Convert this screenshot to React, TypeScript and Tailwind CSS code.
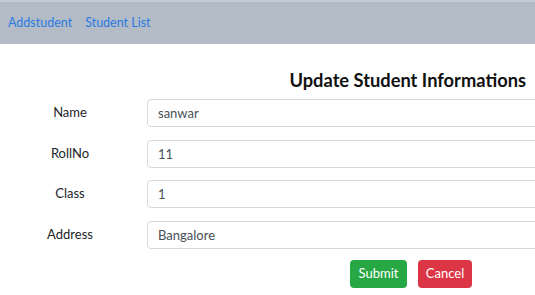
import React from 'react';

const fields = [
  { label: 'Name', value: 'sanwar' },
  { label: 'RollNo', value: '11' },
  { label: 'Class', value: '1' },
  { label: 'Address', value: 'Bangalore' },
];

const App: React.FC = () => {
  return (
    <div className="w-[535px] h-[295px] overflow-hidden bg-white font-['Lato',sans-serif] text-[#212529]">
      <nav className="h-[44px] bg-[#b3bcc6] border-t-2 border-[#c4ccd4] flex items-center gap-[13px] px-[8px] text-[12.5px] text-[#2a7ae2]">
        <a href="#">Addstudent</a>
        <a href="#">Student List</a>
      </nav>
      <div className="pt-[23px]">
        <h2 className="text-[18.3px] font-bold leading-[26px] text-right pr-[9px] text-[#111]">
          Update Student Informations
        </h2>
        <form className="mt-[6px] flex flex-col gap-[12.5px]">
          {fields.map((f) => (
            <div key={f.label} className="flex items-center">
              <label className="w-[140px] shrink-0 text-center text-[13px]">{f.label}</label>
              <input
                readOnly
                value={f.value}
                className="ml-[7px] w-[420px] shrink-0 h-[28px] border border-[#d4d9de] rounded-[4px] px-[10px] text-[13px] text-[#495057] outline-none"
              />
            </div>
          ))}
          <div className="flex gap-[11px] pl-[350px] mt-[-1px]">
            <button type="button" className="w-[57px] h-[28px] rounded-[4px] bg-[#28a745] text-white text-[13px]">
              Submit
            </button>
            <button type="button" className="w-[54px] h-[28px] rounded-[4px] bg-[#dc3545] text-white text-[13px]">
              Cancel
            </button>
          </div>
        </form>
      </div>
    </div>
  );
};

export default App;
